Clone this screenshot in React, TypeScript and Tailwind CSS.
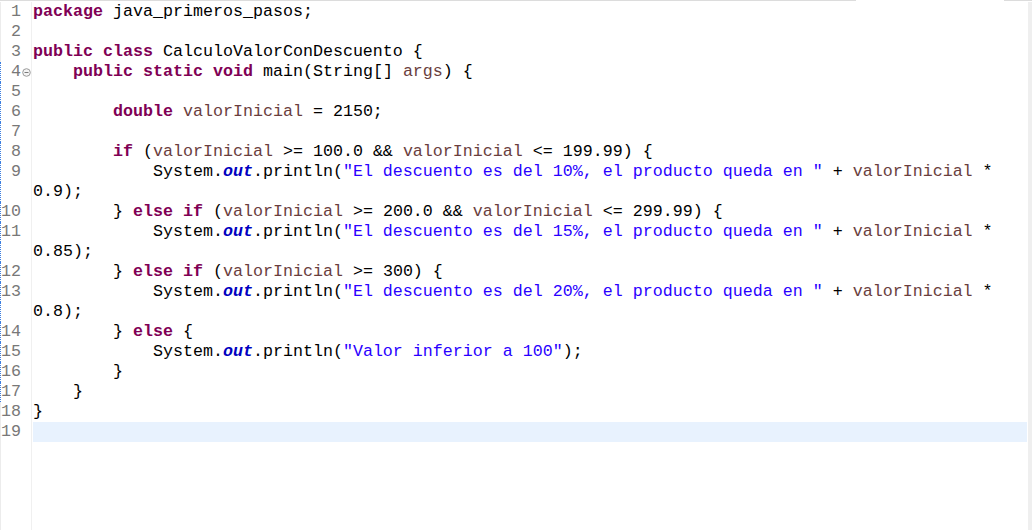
type Tok = { t: string; c?: "k" | "v" | "s" | "f" };
type Row = { n?: number; fold?: boolean; toks: Tok[]; current?: boolean };

const k = (t: string): Tok => ({ t, c: "k" });
const v = (t: string): Tok => ({ t, c: "v" });
const s = (t: string): Tok => ({ t, c: "s" });
const f = (t: string): Tok => ({ t, c: "f" });
const p = (t: string): Tok => ({ t });

const VI = "valorInicial";

const printLine = (pct: string): Tok[] => [
  p("            System."),
  f("out"),
  p(".println("),
  s(`"El descuento es del ${pct}, el producto queda en "`),
  p(" + "),
  v(VI),
  p(" *"),
];

const rows: Row[] = [
  { n: 1, toks: [k("package"), p(" java_primeros_pasos;")] },
  { n: 2, toks: [] },
  { n: 3, toks: [k("public"), p(" "), k("class"), p(" CalculoValorConDescuento {")] },
  { n: 4, fold: true, toks: [p("    "), k("public"), p(" "), k("static"), p(" "), k("void"), p(" main(String[] "), v("args"), p(") {")] },
  { n: 5, toks: [] },
  { n: 6, toks: [p("        "), k("double"), p(" "), v(VI), p(" = 2150;")] },
  { n: 7, toks: [] },
  { n: 8, toks: [p("        "), k("if"), p(" ("), v(VI), p(" >= 100.0 && "), v(VI), p(" <= 199.99) {")] },
  { n: 9, toks: printLine("10%") },
  { toks: [p("0.9);")] },
  { n: 10, toks: [p("        } "), k("else"), p(" "), k("if"), p(" ("), v(VI), p(" >= 200.0 && "), v(VI), p(" <= 299.99) {")] },
  { n: 11, toks: printLine("15%") },
  { toks: [p("0.85);")] },
  { n: 12, toks: [p("        } "), k("else"), p(" "), k("if"), p(" ("), v(VI), p(" >= 300) {")] },
  { n: 13, toks: printLine("20%") },
  { toks: [p("0.8);")] },
  { n: 14, toks: [p("        } "), k("else"), p(" {")] },
  { n: 15, toks: [p("            System."), f("out"), p(".println("), s('"Valor inferior a 100"'), p(");")] },
  { n: 16, toks: [p("        }")] },
  { n: 17, toks: [p("    }")] },
  { n: 18, toks: [p("}")] },
  { n: 19, toks: [], current: true },
];

const tokClass: Record<string, string> = {
  k: "text-[#7f0055] font-bold",
  v: "text-[#6a3e3e]",
  s: "text-[#2a00ff]",
  f: "text-[#0000c0] font-bold italic",
};

function FoldIcon() {
  return (
    <svg width="9" height="9" viewBox="0 0 9 9" className="mt-[1px]">
      <circle cx="4.5" cy="4.5" r="3.8" fill="#f4f4f4" stroke="#9a9a9a" strokeWidth="1" />
      <path d="M2.5 4.5h4" stroke="#7a7a7a" strokeWidth="1" />
    </svg>
  );
}

export default function App() {
  return (
    <div className="w-[1032px] h-[530px] bg-white overflow-hidden flex flex-col font-['Liberation_Mono','Courier_New',monospace] text-[16.667px] leading-[20px] text-black">
      {/* tab strip remains */}
      <div className="flex h-[2px] shrink-0">
        <div className="w-[856px] h-px bg-[#dcdcdc]" />
        <div className="w-[148px] h-px bg-white" />
        <div className="flex-1 h-px bg-[#dcdcdc]" />
      </div>

      <div className="flex flex-1 min-h-0">
        <div className="flex flex-col flex-1">
          {rows.map((r, i) => {
            const inRange = i >= 3 && i <= 19;
            return (
              <div key={i} className="flex h-[20px]">
                {/* gutter */}
                <div
                  className={`w-[31px] shrink-0 flex border-l ${inRange ? "border-dotted border-[#3b7ee0]" : "border-solid border-[#ececec]"}`}
                >
                  <div className="w-[20px] text-right text-[#787878] whitespace-pre">{r.n ?? ""}</div>
                  <div className="w-[10px] flex items-center justify-center">{r.fold && <FoldIcon />}</div>
                </div>
                <div className="w-px shrink-0 bg-[#f0f0f0]" />
                <div className="w-px shrink-0" />
                <div className={`flex-1 whitespace-pre ${r.current ? "bg-[#e8f2fe]" : ""}`}>
                  {r.toks.map((t, j) => (
                    <span key={j} className={t.c ? tokClass[t.c] : ""}>
                      {t.t}
                    </span>
                  ))}
                </div>
              </div>
            );
          })}
          <div className="flex flex-1">
            <div className="w-[31px] shrink-0 border-l border-[#ececec]" />
            <div className="w-px shrink-0 bg-[#f0f0f0]" />
          </div>
        </div>
        <div className="w-px shrink-0" />
        <div className="w-[4px] shrink-0 bg-[#efefef]" />
      </div>
    </div>
  );
}
